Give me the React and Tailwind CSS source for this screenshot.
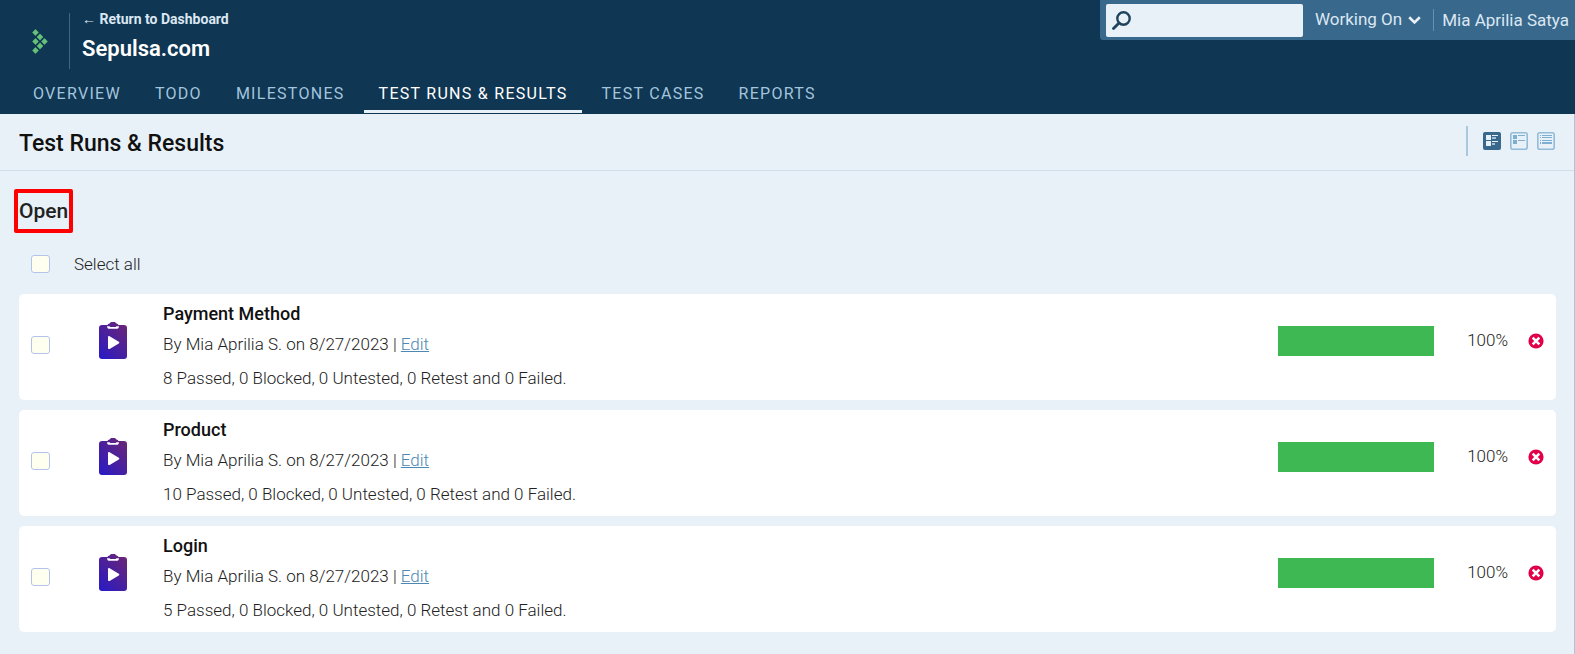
import { useState } from "react";

const tabs = ["Overview", "Todo", "Milestones", "Test Runs & Results", "Test Cases", "Reports"];

const runs = [
  { id: "payment", name: "Payment Method", passed: 8 },
  { id: "product", name: "Product", passed: 10 },
  { id: "login", name: "Login", passed: 5 },
];

const logoDots = [
  [3.5, 3.5],
  [8, 8],
  [3.5, 12.5],
  [12.5, 12.5],
  [8, 17],
  [3.5, 21.5],
];

function Logo() {
  return (
    <svg width="16" height="25" viewBox="0 0 16 25" fill="#65c179" aria-hidden="true">
      {logoDots.map(([x, y]) => (
        <rect key={`${x}-${y}`} x={x - 2.4} y={y - 2.4} width="4.8" height="4.8" rx="0.5" transform={`rotate(45 ${x} ${y})`} />
      ))}
    </svg>
  );
}

function RunIcon({ id }) {
  const fill = `run-fill-${id}`;
  return (
    <svg width="28" height="37" viewBox="0 0 28 37" aria-hidden="true">
      <defs>
        <linearGradient id={fill} x1="0.1" y1="1" x2="0.9" y2="0">
          <stop offset="0" stopColor="#2a1bc4" />
          <stop offset="1" stopColor="#6b2575" />
        </linearGradient>
      </defs>
      <path
        fill={`url(#${fill})`}
        d="M3 3h5.6c.4-1 1-1.4 2-1.5C11.2.5 12 0 13 0h2c1 0 1.8.5 2.4 1.5 1 .1 1.6.5 2 1.5H25a3 3 0 0 1 3 3v28a3 3 0 0 1-3 3H3a3 3 0 0 1-3-3V6a3 3 0 0 1 3-3z"
      />
      <path fill="#fff" d="M8 4.2h2.500l.8.8h5.400l.8-.8H20c0 1.700-1 2.600-2.600 2.600h-6.800C9 6.800 8 5.900 8 4.200z" />
      <path fill="#fff" d="M9 15.200c0-1 .8-1.400 1.600-1l9.200 5.600c.7.5.7 1.100 0 1.600l-9.200 5.500c-.8.4-1.600 0-1.600-.9z" />
    </svg>
  );
}

function DeleteIcon() {
  return (
    <svg width="16" height="16" viewBox="0 0 16 16" aria-hidden="true">
      <circle cx="8" cy="8" r="7.6" fill="#e30048" />
      <path d="M4.700 4.700l6.600 6.600M11.300 4.700l-6.600 6.600" stroke="#fff" strokeWidth="2.600" />
    </svg>
  );
}

function ViewLarge() {
  return (
    <svg width="18" height="18" viewBox="0 0 18 18" aria-hidden="true">
      <rect width="18" height="18" rx="2" fill="#38688b" />
      <path fill="#e9f1f8" d="M3 3h5v5H3zM3 9h5v5H3zM9 3h6v1H9zM9 9h6v1H9z" />
      <path fill="#a5c1d6" d="M9 5h4v2H9zM9 11h3v2H9z" />
    </svg>
  );
}

function ViewMedium() {
  return (
    <svg width="18" height="18" viewBox="0 0 18 18" aria-hidden="true">
      <rect x="0.8" y="0.8" width="16.4" height="16.4" rx="2" fill="none" stroke="#93bcd9" strokeWidth="1.6" />
      <path fill="#7eaed0" d="M3 3h4v4H3zM3 8h4v4H3zM8 3h7v1H8zM8 8h7v1H8z" />
    </svg>
  );
}

function ViewCompact() {
  return (
    <svg width="18" height="18" viewBox="0 0 18 18" aria-hidden="true">
      <rect x="0.8" y="0.8" width="16.4" height="16.4" rx="2" fill="none" stroke="#93bcd9" strokeWidth="1.6" />
      <path fill="#7eaed0" d="M3 3h1v1H3zM5 3h10v1H5zM3 5h1v1H3zM5 5h10v1H5zM3 8h1v1H3zM5 8h10v1H5zM3 10h1v2H3zM5 10h10v2H5z" />
    </svg>
  );
}

function CheckBox({ id, label, checked, onChange }) {
  return (
    <input
      id={id}
      type="checkbox"
      aria-label={label}
      checked={checked}
      onChange={onChange}
      className="h-[18px] w-[19px] shrink-0 appearance-none rounded-[3px] border border-[#b4c3ec] bg-[#fffff0] checked:bg-[#38688b]"
    />
  );
}

export default function App() {
  const [selected, setSelected] = useState([]);
  const allSelected = selected.length === runs.length;
  const toggle = (id) =>
    setSelected((now) => (now.includes(id) ? now.filter((x) => x !== id) : [...now, id]));

  return (
    <div className="flex min-h-screen flex-col bg-[#e9f1f8] font-[Roboto,sans-serif] text-[#222]">
      <header className="bg-[#0f3652]">
        <div className="flex items-start justify-between">
          <div className="flex items-center pt-[13px] pl-8">
            <Logo />
            <div className="ml-[21px] flex h-14 flex-col border-l border-[#38688b] pl-3">
              <a href="#dashboard" className="-mt-1 text-sm leading-5 font-bold text-[#dbe7f3]">
                <span className="font-normal">←</span> Return to Dashboard
              </a>
              <div className="mt-1.5 text-[22px] leading-7 font-semibold text-white">Sepulsa.com</div>
            </div>
          </div>
          <div className="flex h-10 items-center rounded-bl-[3px] bg-[#38688b] pr-1.5 pl-1.5 text-[17px] text-[#dbe7f3]">
            <label className="flex h-[33px] w-[197px] items-center rounded-[2px] bg-[#e9f1f8] pl-1.5">
              <svg width="19" height="19" viewBox="0 0 19 19" fill="none" stroke="#1d435e" aria-hidden="true">
                <circle cx="11.500" cy="7.500" r="6.200" strokeWidth="2.400" />
                <path d="M7 12l-5.500 5.500" strokeWidth="2.800" strokeLinecap="round" />
              </svg>
              <input type="search" aria-label="Search" className="min-w-0 flex-1 bg-transparent px-1 text-[#222] outline-none" />
            </label>
            <button type="button" className="ml-3 flex items-center gap-1.5">
              Working On
              <svg width="13" height="9" viewBox="0 0 13 9" fill="none" stroke="#e9f1f8" strokeWidth="2.600" aria-hidden="true">
                <path d="M1.200 1.300l5.300 5.200 5.300-5.200" />
              </svg>
            </button>
            <button type="button" className="ml-3 border-l border-[#5f93bb] pl-2 leading-[22px]">
              Mia Aprilia Satya
            </button>
          </div>
        </div>
        <nav className="flex gap-1 pb-px pl-[18px]">
          {tabs.map((tab) => {
            const active = tab === "Test Runs & Results";
            return (
              <a
                key={tab}
                href="#tab"
                aria-current={active ? "page" : undefined}
                className={
                  "flex h-11 items-center border-b-3 px-[15px] pt-2 text-base tracking-[0.08em] uppercase " +
                  (active ? "border-[#e9f1f8] text-white" : "border-transparent text-[#a3c5de]")
                }
              >
                {tab}
              </a>
            );
          })}
        </nav>
      </header>

      <main className="flex-1 border-r border-[#a9c5dc]">
        <div className="flex h-[57px] items-center justify-between border-b border-[#cfdfea] pr-[19px] pl-[19px]">
          <h1 className="pt-1 text-[23px] font-medium text-[#111]">Test Runs &amp; Results</h1>
          <div className="flex items-center gap-[9px] pb-0.5">
            <div className="mr-1.5 h-[30px] w-0.5 bg-[#a9c8de]" />
            <button type="button" aria-label="Large view"><ViewLarge /></button>
            <button type="button" aria-label="Medium view"><ViewMedium /></button>
            <button type="button" aria-label="Compact view"><ViewCompact /></button>
          </div>
        </div>

        <section className="pt-[18px] pr-[18px] pb-5 pl-[19px]">
          <h2 className="-ml-[5px] flex h-11 w-fit items-center rounded-[2px] border-4 border-[#ff0000] px-px pt-0.5 text-[21px] font-medium text-[#222]">
            Open
          </h2>
          <div className="flex h-[61px] items-center gap-6 pl-3">
            <CheckBox
              id="select-all"
              checked={allSelected}
              onChange={() => setSelected(allSelected ? [] : runs.map((r) => r.id))}
            />
            <label htmlFor="select-all" className="pt-0.5 text-[17px] font-light">Select all</label>
          </div>

          <ul className="flex flex-col gap-2.5">
            {runs.map((run) => (
              <li key={run.id} className="flex rounded-[5px] bg-white px-3">
                <div className="flex items-center pb-1">
                  <CheckBox
                    label={`Select ${run.name}`}
                    checked={selected.includes(run.id)}
                    onChange={() => toggle(run.id)}
                  />
                </div>
                <div className="ml-[49px] pt-7"><RunIcon id={run.id} /></div>
                <div className="ml-9 flex-1 pt-2 pb-2.5 text-[17px] font-light">
                  <h3 className="text-lg leading-6 font-medium text-[#111]">{run.name}</h3>
                  <p className="mt-1.5 leading-6">
                    By Mia Aprilia S. on 8/27/2023 |{" "}
                    <a href="#edit" className="text-[#4d87b3] underline">Edit</a>
                  </p>
                  <p className="mt-2.5 leading-6">
                    {run.passed} Passed, 0 Blocked, 0 Untested, 0 Retest and 0 Failed.
                  </p>
                </div>
                <div className="flex h-[94px] items-center">
                  <div className="h-[30px] w-[156px] bg-[#3db852]" />
                  <span className="w-[74px] text-right text-[17px] font-light">100%</span>
                  <button type="button" aria-label={`Delete ${run.name}`} className="ml-5">
                    <DeleteIcon />
                  </button>
                </div>
              </li>
            ))}
          </ul>
        </section>
      </main>
    </div>
  );
}
